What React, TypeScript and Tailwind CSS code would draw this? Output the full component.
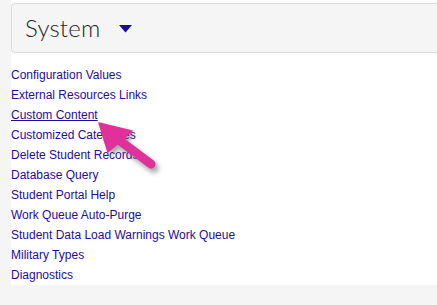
import React from "react";

const links = [
  "Configuration Values",
  "External Resources Links",
  "Custom Content",
  "Customized Categories",
  "Delete Student Records",
  "Database Query",
  "Student Portal Help",
  "Work Queue Auto-Purge",
  "Student Data Load Warnings Work Queue",
  "Military Types",
  "Diagnostics",
];

export default function App() {
  return (
    <div className="relative w-[437px] h-[305px] bg-[#f5f5f5] overflow-hidden">
      <div className="ml-[11px] bg-white pt-[3px]">
        <div className="h-[50px] bg-[#f5f5f5] border border-r-0 border-[#dcdcdc] rounded-l-[4px] flex items-center pl-[13px]">
          <span
            className="text-[24px] font-light text-[#1f1f1f] leading-none tracking-[0.2px]"
            style={{ fontFamily: "Lato, sans-serif" }}
          >
            System
          </span>
          <svg width="13" height="8" viewBox="0 0 13 8" className="ml-[19px] mt-[2px]">
            <polygon points="0,0 13,0 6.5,7.5" fill="#180c8c" />
          </svg>
        </div>
        <ul
          className="mt-[12px] text-[12px] leading-[20px] text-[#1e0ca0]"
          style={{ fontFamily: "'Liberation Sans', Arial, sans-serif" }}
        >
          {links.map((l) => (
            <li key={l}>
              <a className={l === "Custom Content" ? "underline" : ""}>{l}</a>
            </li>
          ))}
        </ul>
      </div>
      <svg
        className="absolute left-0 top-0 pointer-events-none"
        width="437"
        height="305"
      >
        <defs>
          <filter id="sh" x="-50%" y="-50%" width="200%" height="200%">
            <feGaussianBlur stdDeviation="2.5" />
          </filter>
        </defs>
        <g transform="translate(3,4)" filter="url(#sh)" opacity="0.55">
          <polygon points="99,123 132,131 108,152" fill="#555" />
          <line x1="117" y1="139" x2="151" y2="164" stroke="#555" strokeWidth="9" strokeLinecap="round" />
        </g>
        <polygon points="99,123 132,131 108,152" fill="#e0309a" stroke="#e0309a" strokeWidth="1.5" strokeLinejoin="round" />
        <line x1="115" y1="137" x2="151" y2="164" stroke="#e0309a" strokeWidth="9" strokeLinecap="round" />
      </svg>
    </div>
  );
}
